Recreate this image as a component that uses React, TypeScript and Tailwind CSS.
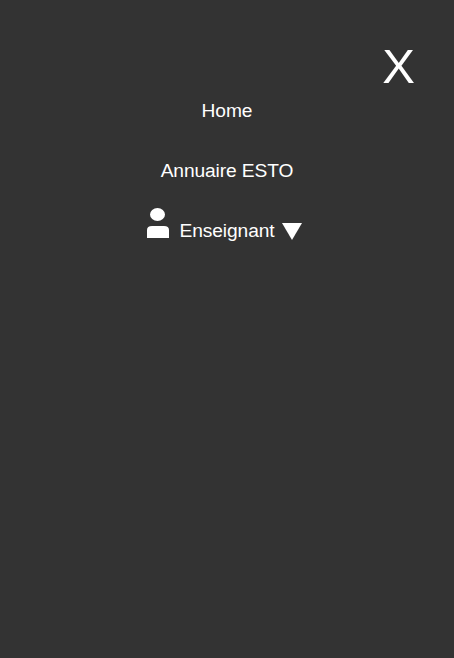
export default function App() {
  return (
    <div className="flex h-[658px] w-full flex-col bg-[#333333] font-['Liberation_Sans',Arial,sans-serif] text-white">
      <div className="flex h-[95px] items-start justify-end pt-[39px] pr-[39px]">
        <button className="h-[54px] text-[49px] leading-[54px]">X</button>
      </div>
      <nav className="flex flex-col items-center text-[19.2px] leading-[22px] tracking-[-0.1px]">
        <a className="mt-[5px]">Home</a>
        <a className="mt-[38px]">Annuaire ESTO</a>
        <div className="mt-[26px] mr-[5px] flex w-[155px] items-start">
          <svg className="shrink-0" width="22" height="30" viewBox="0 0 22 30" fill="currentColor">
            <ellipse cx="10.5" cy="6.5" rx="7.5" ry="6.5" />
            <path d="M0 30v-8q0-4 5-4h12q5 0 5 4v8z" />
          </svg>
          <span className="mt-[12px] ml-[10.5px] w-[95px] whitespace-nowrap">Enseignant</span>
          <svg className="mt-[15px] ml-[7.5px] shrink-0" width="20" height="17" viewBox="0 0 20 17" fill="currentColor">
            <path d="M0 0h20L10 17z" />
          </svg>
        </div>
      </nav>
    </div>
  );
}
